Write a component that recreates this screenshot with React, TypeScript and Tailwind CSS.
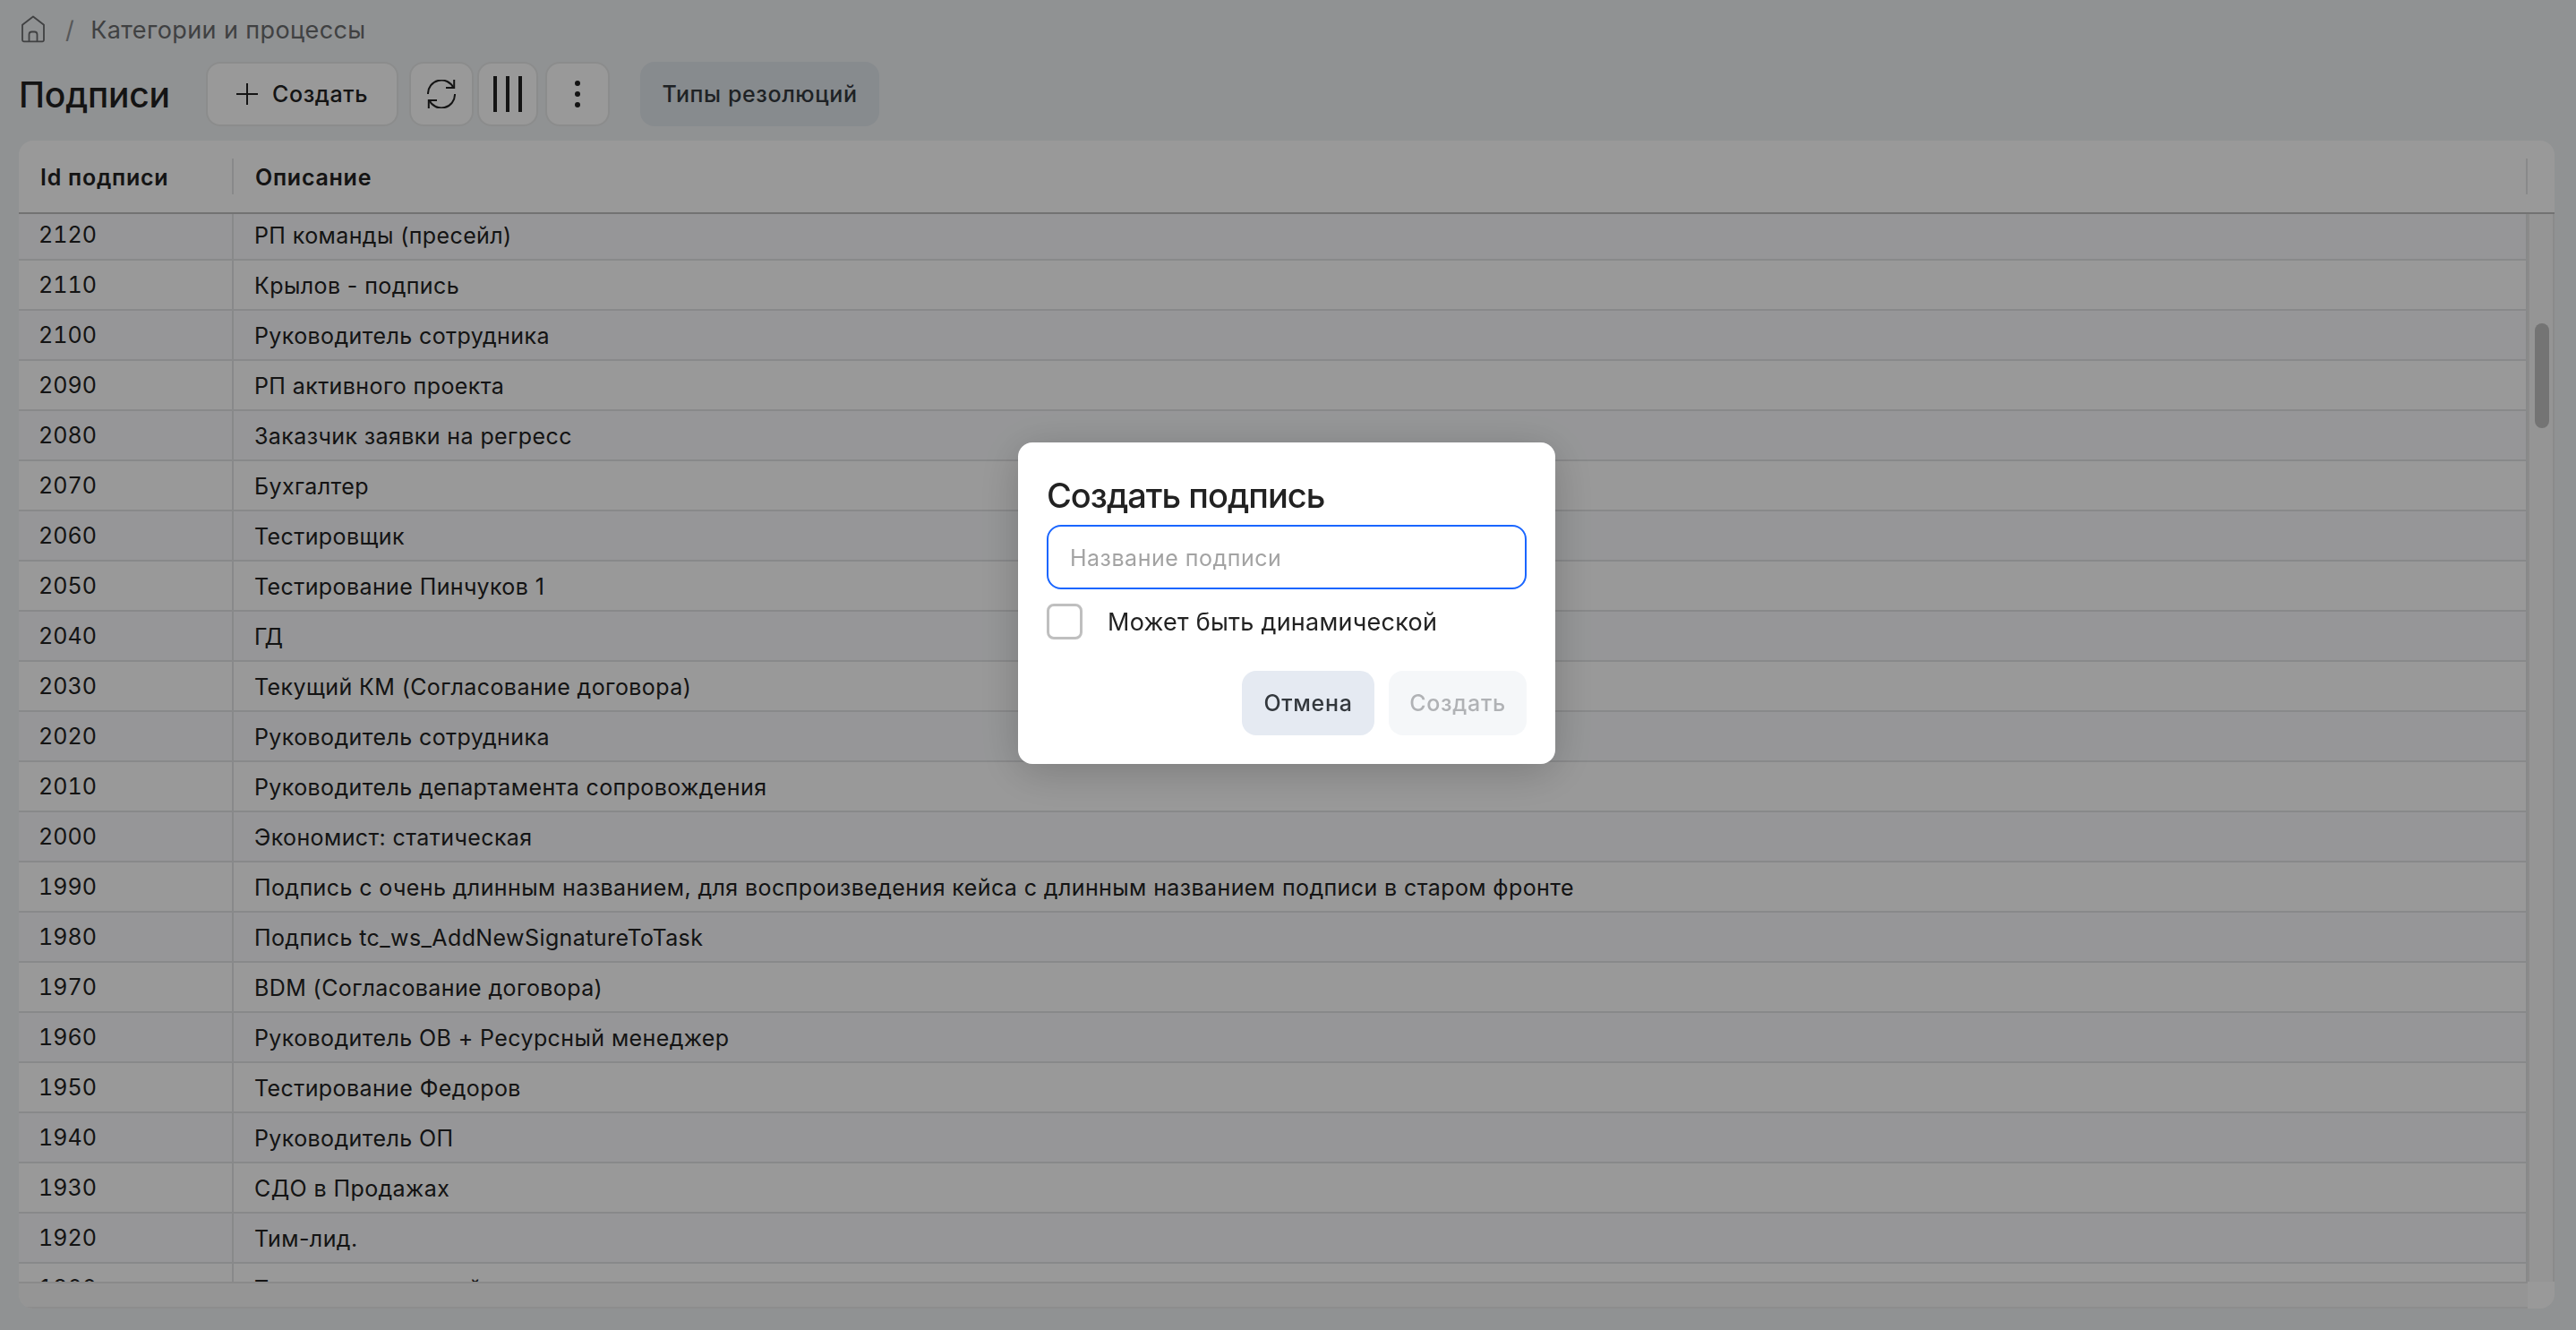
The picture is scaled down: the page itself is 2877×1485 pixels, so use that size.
import React from "react";

type Signature = {
  id: number;
  name: string;
};

const signatures: Signature[] = [
  { id: 2120, name: "РП команды (пресейл)" },
  { id: 2110, name: "Крылов - подпись" },
  { id: 2100, name: "Руководитель сотрудника" },
  { id: 2090, name: "РП активного проекта" },
  { id: 2080, name: "Заказчик заявки на регресс" },
  { id: 2070, name: "Бухгалтер" },
  { id: 2060, name: "Тестировщик" },
  { id: 2050, name: "Тестирование Пинчуков 1" },
  { id: 2040, name: "ГД" },
  { id: 2030, name: "Текущий КМ (Согласование договора)" },
  { id: 2020, name: "Руководитель сотрудника" },
  { id: 2010, name: "Руководитель департамента сопровождения" },
  { id: 2000, name: "Экономист: статическая" },
  {
    id: 1990,
    name: "Подпись с очень длинным названием, для воспроизведения кейса с длинным названием подписи в старом фронте",
  },
  { id: 1980, name: "Подпись tc_ws_AddNewSignatureToTask" },
  { id: 1970, name: "BDM (Согласование договора)" },
  { id: 1960, name: "Руководитель ОВ + Ресурсный менеджер" },
  { id: 1950, name: "Тестирование Федоров" },
  { id: 1940, name: "Руководитель ОП" },
  { id: 1930, name: "СДО в Продажах" },
  { id: 1920, name: "Тим-лид." },
  { id: 1900, name: "Тестировщик новый" },
];

const HomeIcon = () => (
  <svg width="28" height="32" viewBox="0 0 28 32" fill="none" stroke="currentColor" strokeWidth="1.8" strokeLinejoin="round">
    <path d="M2 11.8 14 2.5l12 9.3V28.5a1.8 1.8 0 0 1-1.8 1.8H3.8A1.8 1.8 0 0 1 2 28.5Z" />
    <path d="M9.5 30.3V22.5a3 3 0 0 1 3-3h3a3 3 0 0 1 3 3v7.8" />
  </svg>
);

const PlusIcon = () => (
  <svg width="24" height="24" viewBox="0 0 24 24" stroke="currentColor" strokeWidth="2">
    <path d="M12 0v24M0 12h24" />
  </svg>
);

const RefreshIcon = () => (
  <svg width="32" height="32" viewBox="0 0 32 32" fill="none" stroke="currentColor" strokeWidth="2">
    <path d="M1 16A15 15 0 0 1 29.6 9.2" />
    <path d="M30.2 0v9H21" />
    <path d="M31 16A15 15 0 0 1 2.4 22.8" />
    <path d="M1.8 32v-9H11" />
  </svg>
);

const ColumnsIcon = () => (
  <svg width="32" height="40" viewBox="0 0 32 40" fill="currentColor">
    <rect width="4" height="40" />
    <rect x="14" width="4" height="40" />
    <rect x="28" width="4" height="40" />
  </svg>
);

const DotsIcon = () => (
  <svg width="6" height="30" viewBox="0 0 6 30" fill="currentColor">
    <circle cx="3" cy="3" r="3" />
    <circle cx="3" cy="15" r="3" />
    <circle cx="3" cy="27" r="3" />
  </svg>
);

const Toolbar = () => (
  <div className="flex h-[72px] items-center pl-[21px]">
    <h1 className="w-[209px] whitespace-nowrap pt-px text-[39px] font-medium leading-none tracking-[-0.2px]">
      Подписи
    </h1>
    <button className="flex h-[72px] w-[215px] items-center gap-4 rounded-2xl border-2 border-[#e8eaea] bg-white pl-8 text-[25px] font-medium tracking-[0.6px]">
      <PlusIcon />
      <span className="pt-0.5">Создать</span>
    </button>
    <button className="ml-3 flex size-[72px] items-center justify-center rounded-2xl border-2 border-[#e8eaea] bg-white">
      <RefreshIcon />
    </button>
    <button className="ml-1 flex h-[72px] w-[68px] items-center justify-center rounded-2xl border-2 border-[#e8eaea] bg-white">
      <ColumnsIcon />
    </button>
    <button className="ml-2 flex size-[72px] items-center justify-center rounded-2xl border-2 border-[#e8eaea] bg-white">
      <DotsIcon />
    </button>
    <button className="ml-[34px] flex h-[72px] w-[267px] items-center justify-center rounded-2xl bg-[#e1e8ed] pt-0.5 text-[25px] font-medium tracking-[0.6px] text-[#343a3f]">
      Типы резолюций
    </button>
  </div>
);

const SignatureTable = () => (
  <div className="mx-[21px] mt-4 mr-6 flex h-[1304px] flex-col overflow-hidden rounded-2xl bg-white text-[25px]">
    <div className="flex h-[82px] shrink-0 items-center border-b-2 border-[#bebebe] font-semibold tracking-[0.75px]">
      <div className="flex h-10 w-[240px] items-center border-r-2 border-[#e3e4e6] pl-6 pt-[3px]">Id подписи</div>
      <div className="flex h-10 w-[2562px] items-center border-r-2 border-[#e3e4e6] pl-6 pt-[3px]">Описание</div>
    </div>

    <div className="flex min-h-0 flex-1">
      <div className="flex min-w-0 flex-1 flex-col">
        <div className="flex min-h-0 flex-1 flex-col overflow-hidden border-b-2 border-[#e6e6e6]">
          {signatures.map((signature) => (
            <div
              key={signature.id}
              className="flex h-14 shrink-0 border-b-2 border-[#e3e4e6] odd:bg-[#fafbfe] first:-mt-1"
            >
              <div className="flex w-[240px] items-center border-r-2 border-[#e3e4e6] pl-[22px] pt-0.5 tabular-nums">
                {signature.id}
              </div>
              <div className="flex flex-1 items-center whitespace-nowrap border-r-2 border-[#e3e4e6] pl-[23px] pt-[3px] tracking-[0.4px]">
                {signature.name}
              </div>
            </div>
          ))}
        </div>
        <div className="h-[26px] shrink-0 bg-[#f9f9f9]" />
        <div className="h-0.5 shrink-0 bg-[#ececec]" />
      </div>
      <div className="flex w-[30px] flex-col">
        <div className="flex flex-1 border-x-2 border-[#e8e8e8] bg-[#f9f9f9] pl-1.5 pt-[122px]">
          <div className="h-[117px] w-4 rounded-full bg-[#c1c1c1]" />
        </div>
        <div className="h-[30px]" />
      </div>
    </div>
  </div>
);

const CreateDialog = () => (
  <div className="fixed inset-0 flex justify-center bg-black/40 pt-[494px] pr-[3px]">
    <div className="flex h-[359px] w-[600px] flex-col rounded-2xl bg-white px-8 pt-8 text-[25px] shadow-[0_8px_48px_rgba(0,0,0,0.2)]">
      <h2 className="h-[60px] whitespace-nowrap text-[38px] font-medium leading-[54px] tracking-[-1px]">
        Создать подпись
      </h2>
      <input
        className="h-[72px] w-full shrink-0 rounded-2xl border-2 border-[#1a66ff] px-6 pt-0.5 tracking-[0.5px] outline-none placeholder:text-[#a3a3a3]"
        placeholder="Название подписи"
      />
      <label className="mt-4 flex h-10 items-center gap-7 text-[27px] tracking-[0.25px]">
        <span className="size-10 rounded-lg border-3 border-[#bfbfbf]" />
        <span className="pt-0.5">Может быть динамической</span>
      </label>
      <div className="mt-[35px] flex justify-end gap-4 font-medium tracking-[0.7px]">
        <button className="h-[72px] w-[148px] rounded-2xl bg-[#e5eaf2] pt-0.5 text-[#33383d]">Отмена</button>
        <button className="h-[72px] w-[154px] rounded-2xl bg-[#f5f7f9] pt-0.5 text-[#b0b2b5]">Создать</button>
      </div>
    </div>
  </div>
);

const App = () => {
  return (
    <div className="h-[1485px] w-full overflow-hidden bg-[#f1f3f5] font-['Inter',sans-serif] text-[#222222]">
      <nav className="flex h-[69px] items-start pl-[23px] pt-4 text-[27px] leading-[36px] tracking-[0.4px] text-[#6b6d6f]">
        <HomeIcon />
        <span className="ml-[22px] text-[#8f9193]">/</span>
        <span className="ml-[18px]">Категории и процессы</span>
      </nav>
      <Toolbar />
      <SignatureTable />
      <CreateDialog />
    </div>
  );
};

export default App;
